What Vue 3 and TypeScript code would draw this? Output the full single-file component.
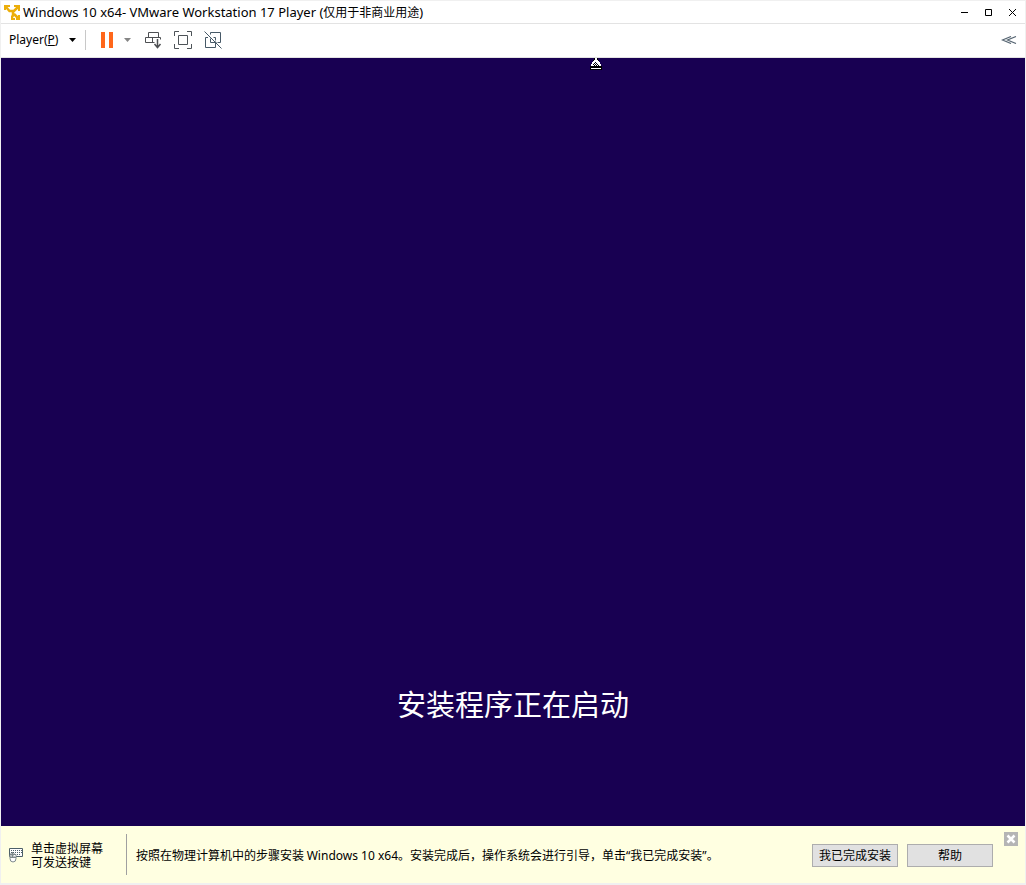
<script setup lang="ts">
const appTitle = 'Windows 10 x64- VMware Workstation 17 Player'
const edition = '仅用于非商业用途'
</script>

<template>
  <div class="window">
    <header class="titlebar">
      <svg class="logo" width="17" height="17" viewBox="0 0 17 17" fill="none" stroke="#ecae0a" stroke-width="2" aria-hidden="true">
        <path d="M1 6V2h5M10 2h5v5M8 12v3h3M12 15h3v-4" />
        <path d="M2 3l3.500 4H10l4-4M9 7v4M10 10l4.500 4.500M9.500 10.500L8 13" stroke-width="2.500" />
      </svg>
      <h1>{{ appTitle }} (<span class="han">{{ edition }}</span>)</h1>
      <div class="controls">
        <button type="button" aria-label="最小化">
          <svg width="9" height="9" viewBox="0 0 9 9" stroke="#000"><path d="M1 4.500h7" /></svg>
        </button>
        <button type="button" aria-label="最大化">
          <svg width="9" height="9" viewBox="0 0 9 9" fill="none" stroke="#000"><path d="M1.500 1.500h6v6h-6z" /></svg>
        </button>
        <button type="button" aria-label="关闭">
          <svg width="9" height="9" viewBox="0 0 9 9" stroke="#000"><path d="M1 1l7 7M8 1l-7 7" /></svg>
        </button>
      </div>
    </header>

    <nav class="toolbar">
      <button type="button" class="player">
        <span>Player(<u>P</u>)</span>
        <svg width="7" height="4" viewBox="0 0 7 4" fill="#000"><path d="M0 0h7L3.500 4z" /></svg>
      </button>
      <span class="rule"></span>
      <button type="button" class="pause" aria-label="挂起">
        <svg width="12" height="16" viewBox="0 0 12 16" fill="#ff671b"><path d="M0 0h4v16H0zM8 0h4v16H8z" /></svg>
      </button>
      <button type="button" class="more" aria-label="电源选项">
        <svg width="7" height="4" viewBox="0 0 7 4" fill="#858585"><path d="M0 0h7L3.500 4z" /></svg>
      </button>
      <button type="button" class="tool" aria-label="发送 Ctrl+Alt+Del">
        <svg width="18" height="18" viewBox="0 0 18 18" fill="none" stroke="#4d4f52">
          <path d="M4.500 1.500h10v5h-10zM10.500 11.500h-9v-5h15v2M8.500 6.500v5" />
          <path d="M13.500 8v8M10.500 13l3 3.500 3-3.500" stroke-width="1.500" />
        </svg>
      </button>
      <button type="button" class="tool" aria-label="全屏">
        <svg width="18" height="18" viewBox="0 0 18 18" fill="none" stroke="#4d5358">
          <path d="M.5 5V.5H5M13 .5h4.500V5M17.500 13v4.500H13M5 17.500H.5V13M4.500 4.500h9v9h-9z" />
        </svg>
      </button>
      <button type="button" class="tool" aria-label="Unity 模式">
        <svg width="18" height="18" viewBox="0 0 18 18" fill="none" stroke="#465967">
          <path d="M6.500 3.500v-2h10v10h-10v-4M11.500 6.500h-2M4 6.500H1.500v10h10v-10" />
          <path d="M1.500 0L18 16.500" stroke="#fff" />
          <path d="M.5.5l17 17" />
        </svg>
      </button>
      <button type="button" class="collapse" aria-label="折叠工具栏">
        <svg width="16" height="8" viewBox="0 0 16 8" fill="none" stroke="#566572" stroke-width="1.200"><path d="M10 .5l-8.500 3.500L10 7.500M15 .5L6.500 4 15 7.500" /></svg>
      </button>
    </nav>

    <main class="screen">
      <svg class="pull" width="12" height="12" viewBox="0 0 12 12" aria-hidden="true">
        <path d="M4 0h4v2h1v2h1v2h1v2h1v4H0V8h1V6h1V4h1V2h1z" fill="#000" />
        <path d="M5 0h2v2h1v1h1v1h1v2h1v2H1V6h1V4h1V3h1V2h1zM1 10h10v1H1z" fill="#fff" />
        <path d="M5 4h1v1H5zM4 5h1v1H4zM6 5h1v1H6zM3 6h1v1H3zM5 6h1v1H5zM7 6h1v1H7zM4 7h1v1H4zM6 7h1v1H6zM8 7h1v1H8zM2 8h8v1H2z" fill="#000" />
      </svg>
      <p>安装程序正在启动</p>
    </main>

    <footer class="notice">
      <div class="hint">
        <svg width="15" height="15" viewBox="0 0 15 15" fill="none" stroke="#4d6069" aria-hidden="true">
          <path d="M2 8.500H.5v-8h13v8H7" fill="#fff" />
          <path d="M2 2.500h11M2 4.500h11M6 6.500h6" stroke-dasharray="1 1" />
          <path d="M1 6.500v4q0 3.500 3 3.500t3-3.500v-4zM1 9.500h6" stroke="#7e898b" fill="#fff" />
          <path d="M3.500 4v5M1.500 5l4 4M5.500 5l-4 4" stroke="#7e898b" />
        </svg>
        <p><span>单击虚拟屏幕</span><br><span>可发送按键</span></p>
      </div>
      <p class="message">按照在物理计算机中的步骤安装 <span class="latin">Windows 10 x64</span>。安装完成后，操作系统会进行引导，单击<span class="latin">“</span>我已完成安装<span class="latin">”</span>。</p>
      <button type="button" class="action">我已完成安装</button>
      <button type="button" class="action">帮助</button>
      <button type="button" class="dismiss" aria-label="关闭提示">
        <svg width="14" height="14" viewBox="0 0 14 14"><path d="M0 0h14v14H0z" fill="#b5b5b5" /><path d="M3.500 3.500l7 7M10.500 3.500l-7 7" stroke="#fff" stroke-width="2.500" /></svg>
      </button>
    </footer>
  </div>
</template>

<style>
body {
  margin: 0;
  background: #f0f0f0;
}
</style>

<style scoped>
.window {
  box-sizing: border-box;
  display: flex;
  flex-direction: column;
  min-height: 100vh;
  padding: 1px 1px 2px;
  background: #f0f0f0;
  color: #000;
  font: 12px/14px "Noto Sans", "Noto Sans CJK SC", sans-serif;
}

h1,
p {
  margin: 0;
  font-weight: 400;
}

button {
  padding: 0;
  border: 0;
  background: none;
  color: inherit;
  font: inherit;
}

svg {
  display: block;
}

.titlebar {
  display: flex;
  align-items: center;
  height: 22px;
  padding: 0 1px 0 3px;
  background: #fff;
  border-bottom: 1px solid #e3e3e3;
}

h1 {
  flex: 1;
  margin-left: 2px;
  font-size: 13px;
  line-height: 20px;
  white-space: nowrap;
}

.han {
  font-size: 12px;
}

.controls {
  display: flex;
}

.controls button {
  display: grid;
  place-items: center;
  width: 24px;
  height: 20px;
}

.toolbar {
  display: flex;
  align-items: center;
  height: 31px;
  padding: 0 8px 2px;
  background: #fff;
  border-bottom: 1px solid #e3e3e3;
}

.player {
  display: flex;
  align-items: center;
  justify-content: space-between;
  width: 67px;
}

.rule {
  width: 1px;
  height: 20px;
  margin: 0 15px 0 9px;
  background: #c8c8c8;
}

.more {
  margin: 0 13px 0 11px;
}

.tool {
  margin-right: 12px;
}

.collapse {
  margin-left: auto;
}

.screen {
  position: relative;
  flex: 1;
  display: flex;
  align-items: flex-end;
  justify-content: center;
  padding-bottom: 103px;
  background: #180052;
  color: #fff;
}

.screen p {
  font: 29px/40px "Noto Sans CJK SC", sans-serif;
}

.pull {
  position: absolute;
  top: 0;
  left: 57.5%;
}

.notice {
  position: relative;
  display: flex;
  align-items: center;
  gap: 9px;
  min-height: 57px;
  padding: 0 32px 0 8px;
  background: #ffffe1;
  font-family: "Noto Sans CJK SC", sans-serif;
}

.hint {
  display: flex;
  align-items: center;
  gap: 7px;
  box-sizing: border-box;
  width: 118px;
  height: 41px;
  padding-top: 2px;
  border-right: 1px solid #a0a0a0;
  font-family: "Liberation Sans", "Noto Sans CJK SC", sans-serif;
}

.message {
  flex: 1;
  padding-top: 2px;
}

.latin {
  font-family: "Noto Sans", sans-serif;
}

.action {
  width: 86px;
  height: 23px;
  margin-top: 1px;
  background: #e1e1e1;
  border: 1px solid #adadad;
}

.dismiss {
  position: absolute;
  top: 6px;
  right: 7px;
}
</style>
